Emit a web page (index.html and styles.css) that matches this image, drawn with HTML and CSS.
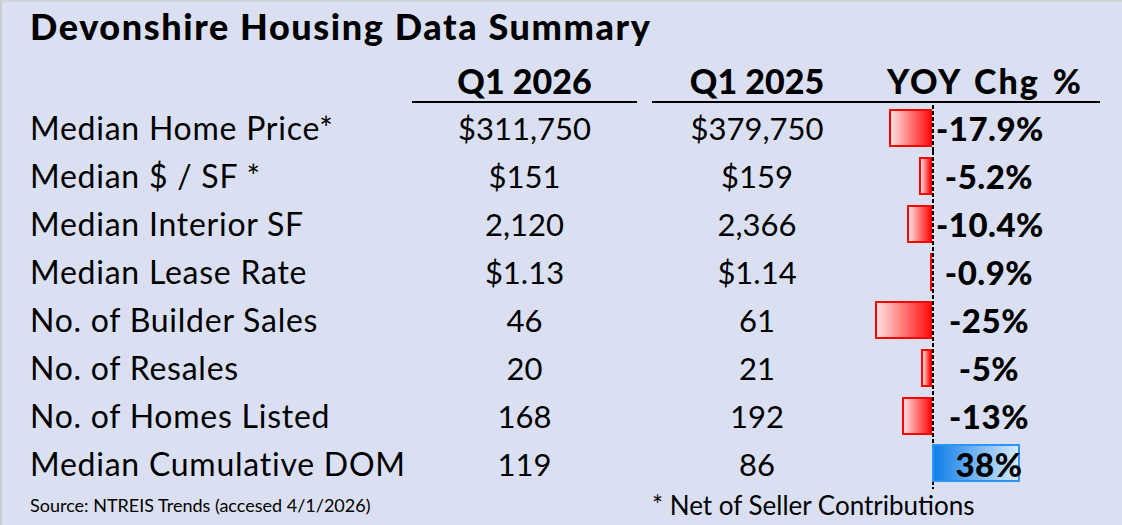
FILE: index.html
```html
<!DOCTYPE html>
<html>
<head>
<meta charset="utf-8">
<link rel="stylesheet" href="styles.css">
</head>
<body>
<div class="panel">
  <h1 class="title">Devonshire Housing Data Summary</h1>
  <div class="row head">
    <div class="c1">Q1 2026</div>
    <div class="c2">Q1 2025</div>
    <div class="c3">YOY Chg %</div>
  </div>
  <div class="row rules">
    <div class="c1 rule"></div>
    <div class="c2-end rule"></div>
  </div>

  <div class="row data">
    <div class="lbl">Median Home Price*</div><div class="c1">$311,750</div><div class="c2">$379,750</div>
    <div class="bar-cell"><div class="bar neg" style="width:43px"></div></div><div class="pct">-17.9%</div>
  </div>
  <div class="row data">
    <div class="lbl">Median $ / SF *</div><div class="c1">$151</div><div class="c2">$159</div>
    <div class="bar-cell"><div class="bar neg" style="width:13px"></div></div><div class="pct">-5.2%</div>
  </div>
  <div class="row data">
    <div class="lbl">Median Interior SF</div><div class="c1">2,120</div><div class="c2">2,366</div>
    <div class="bar-cell"><div class="bar neg" style="width:25px"></div></div><div class="pct">-10.4%</div>
  </div>
  <div class="row data">
    <div class="lbl">Median Lease Rate</div><div class="c1">$1.13</div><div class="c2">$1.14</div>
    <div class="bar-cell"><div class="bar neg thin" style="width:2px"></div></div><div class="pct">-0.9%</div>
  </div>
  <div class="row data">
    <div class="lbl">No. of Builder Sales</div><div class="c1">46</div><div class="c2">61</div>
    <div class="bar-cell"><div class="bar neg" style="width:57px"></div></div><div class="pct">-25%</div>
  </div>
  <div class="row data">
    <div class="lbl">No. of Resales</div><div class="c1">20</div><div class="c2">21</div>
    <div class="bar-cell"><div class="bar neg" style="width:11px"></div></div><div class="pct">-5%</div>
  </div>
  <div class="row data">
    <div class="lbl">No. of Homes Listed</div><div class="c1">168</div><div class="c2">192</div>
    <div class="bar-cell"><div class="bar neg" style="width:30px"></div></div><div class="pct">-13%</div>
  </div>
  <div class="row data">
    <div class="lbl">Median Cumulative DOM</div><div class="c1">119</div><div class="c2">86</div>
    <div class="bar-cell"></div><div class="pct"><div class="bar pos" style="width:88px"></div><span class="pct-text">38%</span></div>
  </div>

  <div class="foot">
    <div class="source">Source: NTREIS Trends (accesed 4/1/2026)</div>
    <div class="note">* Net of Seller Contributions</div>
  </div>
</div>
</body>
</html>
```

FILE: styles.css
```css
html, body {
  margin: 0;
  padding: 0;
  background: #dae0f1;
}
body {
  width: 1122px;
  height: 525px;
  overflow: hidden;
  font-family: "Lato", "Liberation Sans", sans-serif;
  color: #000;
}
.panel {
  box-sizing: border-box;
  width: 1122px;
  height: 525px;
  border-top: 2px solid #d2d4d8;
  border-left: 2px solid #c9ccd3;
  background: #dae0f1;
}
.title {
  margin: 0;
  padding: 4px 0 0 28px;
  height: 52px;
  box-sizing: border-box;
  font-size: 36px;
  font-weight: 900;
  line-height: 40px;
  letter-spacing: 1.6px;
}
.row {
  display: grid;
  grid-template-columns: 28px 382px 225px 15px 210px 70px 110px 58px;
}
.head {
  height: 47px;
  font-size: 34px;
  font-weight: 900;
  line-height: 54px;
  text-align: center;
}
.c1 { grid-column: 3; }
.c2 { grid-column: 5; }
.c3 {
  grid-column: 6 / 9;
  padding-left: 8px;
  letter-spacing: 2px;
  word-spacing: 3px;
  white-space: nowrap;
}
.rules {
  height: 2px;
}
.rule {
  background: #000;
  height: 2px;
}
.c2-end { grid-column: 5 / 9; }
.data {
  height: 48px;
  line-height: 50px;
  font-size: 31px;
}
.data .c1, .data .c2 {
  text-align: center;
}
.rules + .data .pct { background-position: 0 2px; }
.lbl {
  grid-column: 2;
  font-size: 32px;
  letter-spacing: 0.75px;
  white-space: nowrap;
}
.bar-cell {
  grid-column: 6;
  display: flex;
  justify-content: flex-end;
  align-items: center;
}
.pct {
  grid-column: 7;
  position: relative;
  font-size: 33px;
  font-weight: 900;
  letter-spacing: 0.5px;
  text-align: center;
  background-image: linear-gradient(to bottom, #000 65%, transparent 65%);
  background-size: 2px 6px;
  background-repeat: repeat-y;
  background-position: 0 0;
  padding-left: 4px;
  white-space: nowrap;
}
.bar {
  box-sizing: border-box;
  height: 38px;
}
.bar.neg {
  border: 2px solid #ff0000;
  background: linear-gradient(to right, #ffe0e0, #ff1010);
}
.bar.neg.thin {
  border-width: 0;
  background: #ff0000;
}
.bar.pos {
  position: absolute;
  left: 0;
  top: 5px;
  border: 2px solid #2b95ff;
  background: linear-gradient(to right, #0f7fe8, #d6eafc);
}
.pct-text {
  position: relative;
}
.foot {
  display: grid;
  grid-template-columns: 28px 622px 1fr;
  align-items: center;
  height: 36px;
}
.source {
  grid-column: 2;
  font-size: 18px;
}
.note {
  grid-column: 3;
  font-size: 26px;
}
```
